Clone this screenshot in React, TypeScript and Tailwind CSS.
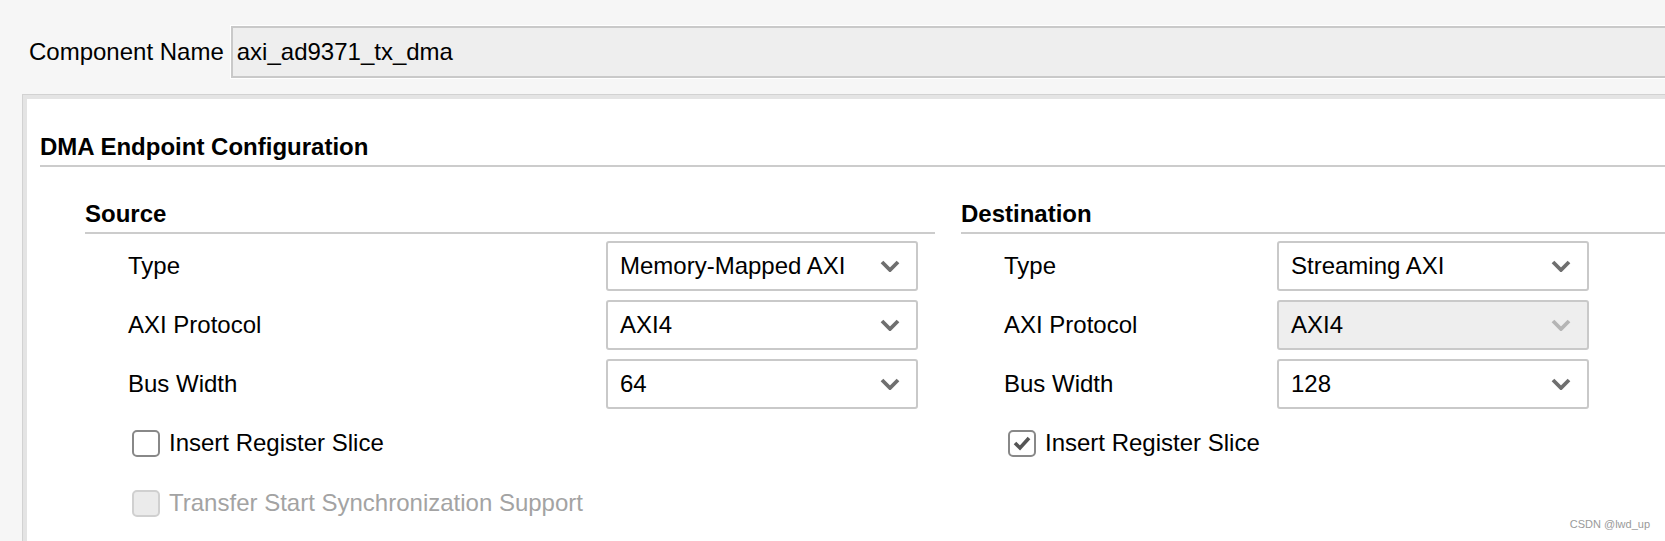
import React from "react";

const Chevron = ({ disabled = false }: { disabled?: boolean }) => (
  <svg width="20" height="12" viewBox="0 0 20 12">
    <path
      d="M2 2 L10 10 L18 2"
      fill="none"
      stroke={disabled ? "#b5b5b5" : "#6f6f6f"}
      strokeWidth="3.8"
    />
  </svg>
);

const Dropdown = ({ value, disabled = false }: { value: string; disabled?: boolean }) => (
  <div
    className={`flex h-[50px] w-[312px] items-center justify-between rounded-[3px] border-2 border-[#c9c9c9] pl-[12px] pr-[16px] ${
      disabled ? "bg-[#eeeeee]" : "bg-white"
    }`}
  >
    <span className="text-[24px] leading-[28px] text-black">{value}</span>
    <Chevron disabled={disabled} />
  </div>
);

const Checkbox = ({
  label,
  checked = false,
  disabled = false,
}: {
  label: string;
  checked?: boolean;
  disabled?: boolean;
}) => (
  <div className="flex h-[28px] items-center pl-[47px]">
    <div
      className={`flex h-[27px] w-[28px] items-center justify-center rounded-[5px] border-2 ${
        disabled ? "border-[#d0d0d0] bg-[#ebebeb]" : "border-[#888888] bg-white"
      }`}
    >
      {checked && (
        <svg width="20" height="18" viewBox="0 0 20 18">
          <path d="M3 9 L8 14 L17 4" fill="none" stroke="#555555" strokeWidth="3.6" />
        </svg>
      )}
    </div>
    <span
      className={`ml-[9px] text-[24px] leading-[28px] ${disabled ? "text-[#a3a3a3]" : "text-black"}`}
    >
      {label}
    </span>
  </div>
);

type Field = { label: string; value: string; disabled?: boolean };

const EndpointColumn = ({
  title,
  labelWidth,
  fields,
  children,
}: {
  title: string;
  labelWidth: string;
  fields: Field[];
  children: React.ReactNode;
}) => (
  <div className="flex flex-col">
    <h3 className="border-b-2 border-[#cccccc] pb-[4px] text-[24px] font-bold leading-[28px] text-black">
      {title}
    </h3>
    <div className="mt-[7px] flex flex-col gap-[9px]">
      {fields.map((f) => (
        <div key={f.label} className="flex h-[50px] items-center pl-[43px]">
          <div className={`${labelWidth} text-[24px] leading-[28px] text-black`}>{f.label}</div>
          <Dropdown value={f.value} disabled={f.disabled} />
        </div>
      ))}
    </div>
    <div className="mt-[20px] flex flex-col gap-[32px]">{children}</div>
  </div>
);

export default function App() {
  return (
    <div className="relative h-[541px] w-full overflow-hidden bg-[#f6f6f6] font-['Liberation_Sans',Arial,sans-serif]">
      {/* component name */}
      <div className="flex items-center pl-[29px] pt-[26px]">
        <span className="shrink-0 whitespace-nowrap text-[24px] leading-[28px] text-black">
          Component Name
        </span>
        <div className="ml-[7px] flex h-[52px] w-[1500px] shrink-0 items-center border-2 border-[#c9c9c9] bg-[#eeeeee] pl-[4px] outline outline-1 outline-white">
          <span className="text-[24px] leading-[28px] text-black">axi_ad9371_tx_dma</span>
        </div>
      </div>

      {/* config panel */}
      <div className="ml-[22px] mt-[16px] h-[500px] border-l border-t border-[#d2d2d2]">
        <div className="h-full border-l-4 border-t-4 border-[#e4e4e4] bg-white pt-[34px]">
          <h2 className="ml-[13px] border-b-2 border-[#cccccc] pb-[4px] text-[24px] font-bold leading-[28px] text-black">
            DMA Endpoint Configuration
          </h2>

          <div className="ml-[58px] mt-[33px] grid w-[1726px] grid-cols-[850px_850px] gap-[26px]">
            <EndpointColumn
              title="Source"
              labelWidth="w-[478px]"
              fields={[
                { label: "Type", value: "Memory-Mapped AXI" },
                { label: "AXI Protocol", value: "AXI4" },
                { label: "Bus Width", value: "64" },
              ]}
            >
              <Checkbox label="Insert Register Slice" />
              <Checkbox label="Transfer Start Synchronization Support" disabled />
            </EndpointColumn>

            <EndpointColumn
              title="Destination"
              labelWidth="w-[273px]"
              fields={[
                { label: "Type", value: "Streaming AXI" },
                { label: "AXI Protocol", value: "AXI4", disabled: true },
                { label: "Bus Width", value: "128" },
              ]}
            >
              <Checkbox label="Insert Register Slice" checked />
            </EndpointColumn>
          </div>
        </div>
      </div>

      <span className="absolute bottom-[10px] right-[15px] text-[11px] leading-[13px] text-[#9a9a9a]">
        CSDN @lwd_up
      </span>
    </div>
  );
}
